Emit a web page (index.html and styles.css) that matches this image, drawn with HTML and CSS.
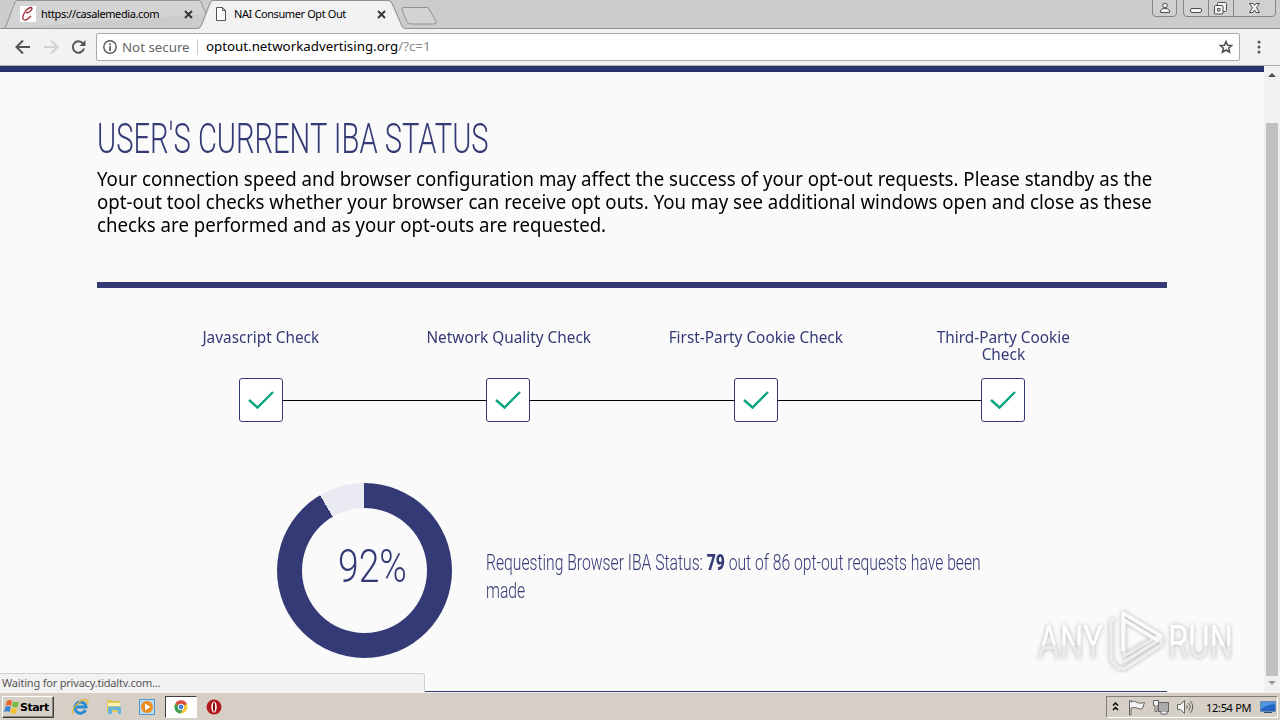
FILE: index.html
```html
<!DOCTYPE html>
<html lang="en">
<head>
  <meta charset="UTF-8">
  <meta name="viewport" content="width=device-width, initial-scale=1.0">
  <title>NAI Consumer Opt Out</title>
  <link rel="stylesheet" href="styles.css">
</head>
<body>
  <div class="tab-strip">
    <svg class="tab-shapes" width="1280" height="29" viewBox="0 0 1280 29">
      <path d="M0 28.5H5L15 2Q16 .5 18 .5H198Q200 .5 201 2L206 14" fill="#d3d3d3" stroke="#929292"/>
      <path d="M404 7.500H428L436 21Q437 24 434 24H411Q408 24 407 22L402 10Q401 8 404 7.500Z" fill="#d3d3d3" stroke="#929292"/>
      <path d="M199 29L202 26L211 3Q212 1 214 1H388Q390 1 391 3L401 26L404 29Z" fill="#f2f2f2"/>
      <path d="M0 28.500H197Q200 28 201 26L210 3Q211 .5 213 .5H388Q391 .5 392 3L402 26Q403 28.500 406 28.500H1280" fill="none" stroke="#929292"/>
    </svg>
    <div class="tab">
      <svg class="favicon" width="16" height="16" viewBox="0 0 16 16">
        <path d="M0 0h16v16H0z" fill="#fff"/>
        <path d="M6 7C10 7 14 2 11 1.500C7 1.500 2 9 3 13C5 16 9 12 11 10" fill="none" stroke="#a32835" stroke-width="1.300"/>
      </svg>
      <span class="tab-title">https://casalemedia.com</span>
      <svg class="tab-close" width="9" height="9" viewBox="0 0 9 9"><path d="M1 1l7 7M8 1L1 8"/></svg>
    </div>
    <div class="tab">
      <svg class="favicon" width="16" height="16" viewBox="0 0 16 16">
        <path d="M3.500 1.500h6l3 3v10h-9zM9.500 1.500v3h3" fill="#fff" stroke="#555"/>
      </svg>
      <span class="tab-title">NAI Consumer Opt Out</span>
      <svg class="tab-close" width="9" height="9" viewBox="0 0 9 9"><path d="M1 1l7 7M8 1L1 8"/></svg>
    </div>
    <svg class="window-buttons" width="128" height="18" viewBox="0 0 128 18">
      <g fill="#d0d0d0" stroke="#858585">
        <path d="M.5 0V13Q.5 16.500 4 16.500H21Q24.500 16.500 24.500 13V0"/>
        <path d="M31.500 0V13Q31.500 16.500 35 16.500H120Q123.500 16.500 123.500 13V0M56.500 0V16M81.500 0V16"/>
      </g>
      <g fill="#f5f5f5" stroke="#4c4c4c">
        <circle cx="13" cy="5.500" r="2.300"/>
        <path d="M8.500 12.500V11Q9 9 11.500 8.500H14.500Q17 9 17.500 11V12.500Z"/>
        <rect x="38.500" y="8.500" width="11" height="4" rx="1.500"/>
        <rect x="65.500" y="2.500" width="9" height="9" rx="1"/>
        <rect x="62.500" y="5.500" width="8.500" height="8.500" rx="1"/>
        <path d="M65.500 8.500h2.500v2.500h-2.500z"/>
        <path d="M97.500 3.500H101L102.500 5.500L104 3.500H107.500L104.500 7.800L107.500 12.500H104L102.500 10L101 12.500H97.500L100.500 7.800Z"/>
      </g>
    </svg>
  </div>

  <div class="toolbar">
    <svg class="nav-icons" width="84" height="26" viewBox="0 0 84 26" fill="none" stroke-width="2">
      <path d="M29 13H16M22 6.500L15.500 13L22 19.500" stroke="#555"/>
      <path d="M43 13H56M50 6.500L56.500 13L50 19.500" stroke="#d2d2d2"/>
      <path d="M82 9.500A5.700 5.700 0 1 0 83 14.500" stroke="#555"/>
      <path d="M84.500 6V12H78.500Z" fill="#555"/>
    </svg>
    <div class="address-bar">
      <svg class="info-icon" width="14" height="14" viewBox="0 0 14 14">
        <circle cx="7" cy="7" r="6.200" fill="none" stroke="#555" stroke-width="1.400"/>
        <path d="M6.200 3.200h1.700v1.700H6.200zM6.200 6h1.700v5H6.200z" fill="#555"/>
      </svg>
      <span class="security">Not secure</span>
      <span class="url">optout.networkadvertising.org<span class="url-path">/?c=1</span></span>
      <svg class="star" width="14" height="14" viewBox="0 0 14 14">
        <path d="M7 1.500L8.600 5.200L12.700 5.500L9.600 8.200L10.600 12.200L7 10L3.400 12.200L4.400 8.200L1.300 5.500L5.400 5.200Z" fill="none" stroke="#4d4d4d" stroke-width="1.500"/>
      </svg>
    </div>
    <svg class="menu-dots" width="4" height="14" viewBox="0 0 4 14" fill="#555">
      <circle cx="2" cy="2" r="1.500"/><circle cx="2" cy="7" r="1.500"/><circle cx="2" cy="12" r="1.500"/>
    </svg>
  </div>

  <div class="viewport">
    <div class="page">
      <h1><span class="narrow">USER'S CURRENT IBA STATUS</span></h1>
      <p class="intro">
        <span class="line">Your connection speed and browser configuration may affect the success of your opt-out requests. Please standby as the</span>
        <span class="line">opt-out tool checks whether your browser can receive opt outs. You may see additional windows open and close as these</span>
        <span class="line">checks are performed and as your opt-outs are requested.</span>
      </p>

      <div class="checks">
        <div class="check">
          <div class="check-label">Javascript Check</div>
          <div class="check-box"><svg width="28" height="22" viewBox="0 0 28 22"><path d="M2 11L10.500 18.500L26 3"/></svg></div>
        </div>
        <div class="check">
          <div class="check-label">Network Quality Check</div>
          <div class="check-box"><svg width="28" height="22" viewBox="0 0 28 22"><path d="M2 11L10.500 18.500L26 3"/></svg></div>
        </div>
        <div class="check">
          <div class="check-label">First-Party Cookie Check</div>
          <div class="check-box"><svg width="28" height="22" viewBox="0 0 28 22"><path d="M2 11L10.500 18.500L26 3"/></svg></div>
        </div>
        <div class="check">
          <div class="check-label">Third-Party Cookie<br>Check</div>
          <div class="check-box"><svg width="28" height="22" viewBox="0 0 28 22"><path d="M2 11L10.500 18.500L26 3"/></svg></div>
        </div>
      </div>

      <div class="progress">
        <div class="donut"><div class="donut-hole"><span class="narrow">92%</span></div></div>
        <div class="progress-text"><span class="narrow">Requesting Browser IBA Status: <b>79</b> out of 86 opt-out requests have been<br>made</span></div>
      </div>
    </div>

    <div class="scrollbar">
      <svg width="8" height="4" viewBox="0 0 8 4"><path d="M0 4L4 0L8 4Z" fill="#4d4d4d"/></svg>
      <div class="thumb"></div>
      <svg width="8" height="4" viewBox="0 0 8 4"><path d="M0 0L4 4L8 0Z" fill="#999"/></svg>
    </div>

    <div class="status-bubble">Waiting for privacy.tidaltv.com...</div>

    <svg class="watermark" width="210" height="76" viewBox="0 0 210 76">
      <defs>
        <linearGradient id="fade" x1="0" y1="0" x2="0" y2="1">
          <stop offset=".55" stop-color="#fff"/><stop offset=".55" stop-color="#ebebeb"/>
        </linearGradient>
      </defs>
      <g class="watermark-text" fill="url(#fade)">
        <text x="8" y="55" textLength="65" lengthAdjust="spacingAndGlyphs">ANY</text>
        <text x="138" y="55" textLength="65" lengthAdjust="spacingAndGlyphs">RUN</text>
      </g>
      <g class="watermark-logo">
        <path d="M94 17V53L128 33" stroke="#e9e9e9"/>
        <path d="M85 16L81 18V57L88 65L94 66L131 42L132 35L94 59" stroke="#ededed"/>
        <path d="M93 48V10L131 33L127 37L94 17" stroke="#fbfbfb"/>
      </g>
    </svg>
  </div>

  <div class="taskbar">
    <div class="start">
      <svg width="16" height="16" viewBox="0 0 16 16">
        <path d="M3 2Q6 0 8 2L7 7Q4 5 1.500 7Z" fill="#e9642b"/>
        <path d="M9 2.500Q12 4 15 2.500L13.500 8Q11 9 8 7.500Z" fill="#78b942"/>
        <path d="M1.300 8Q4 6 6.700 8L5.500 13Q3 11.500 0 13Z" fill="#3a83cf"/>
        <path d="M7.700 8.500Q10 10 13.200 9L12 14Q9 15.500 6.300 13.500Z" fill="#f4c12e"/>
      </svg>
      <span>Start</span>
    </div>
    <div class="launcher">
      <svg width="18" height="18" viewBox="0 0 18 18">
        <path d="M14.500 12A5.600 5.600 0 1 1 15 9H5" fill="none" stroke="#278bd3" stroke-width="3"/>
        <path d="M2 16C-1 13 9 0 16 2Q18 3 16 6" fill="none" stroke="#e5b637" stroke-width="1.300"/>
      </svg>
    </div>
    <div class="launcher">
      <svg width="18" height="18" viewBox="0 0 18 18">
        <path d="M2 2h5l1 1h7v11H2z" fill="#e6c65c"/>
        <path d="M3 5h12v3H3z" fill="#fff3b4"/>
        <path d="M3 16V10Q3 8.500 5 8.500H14Q16 8.500 16 10V16H13V12H7V16Z" fill="#69b5dd"/>
      </svg>
    </div>
    <div class="launcher">
      <svg width="18" height="18" viewBox="0 0 18 18">
        <rect x="1.500" y="1.500" width="15" height="15" fill="#b9dcf3" stroke="#5796c9"/>
        <circle cx="9" cy="9" r="6" fill="#f08a1d"/>
        <path d="M7 5.500L12.500 9L7 12.500Z" fill="#fff"/>
      </svg>
    </div>
    <div class="launcher launcher-open">
      <svg width="14" height="14" viewBox="0 0 14 14">
        <circle cx="7" cy="7" r="6.500" fill="#f4c936"/>
        <path d="M7 7L1.200 4A6.500 6.500 0 0 1 12.900 4Z" fill="#dc4b3e"/>
        <path d="M7 7L1.200 4A6.500 6.500 0 0 0 6.500 13.500L9.500 8.500Z" fill="#3ea055"/>
        <circle cx="7" cy="7" r="3.200" fill="#fff"/><circle cx="7" cy="7" r="2.400" fill="#4b82d7"/>
      </svg>
    </div>
    <div class="launcher">
      <svg width="16" height="16" viewBox="0 0 16 16">
        <circle cx="8" cy="8" r="7.500" fill="#b51720"/>
        <ellipse cx="8" cy="8" rx="2.700" ry="5.500" fill="#fff"/><ellipse cx="8" cy="8" rx="1.100" ry="4.700" fill="#7c0c12"/>
      </svg>
    </div>
    <div class="tray">
      <svg width="92" height="20" viewBox="0 0 92 20">
        <path d="M6 8.500L8.500 6L11 8.500M6 13L8.500 10.500L11 13" fill="none" stroke="#000" stroke-width="1.500"/>
        <g fill="#f5f5f5" stroke="#646464">
          <path d="M22.500 18V3.500H24V5Q28 3 30 5.500Q33 7 37.500 5.500L35.500 11.500Q33 13 30 11Q28 10 24 11V18Z"/>
          <path d="M51.500 5.500H61.500V14.500H51.500Z" fill="#aaa"/>
          <path d="M54 14.500V17H60V14.500M46.500 3.500H51.500V8.500H50V14.500H48V8.500H46.500Z"/>
          <path d="M70.500 7.500H73.500L77.500 3.500V16.500L73.500 12.500H70.500Z"/>
          <path d="M79.500 8Q81 10 79.500 12M81.500 6Q85 10 81.500 14M83.500 4Q88 10 83.500 16" fill="none"/>
        </g>
      </svg>
      <span class="clock">12:54 PM</span>
      <svg width="16" height="14" viewBox="0 0 16 14">
        <path d="M.5 1.500H15.500V11.500H.5Z" fill="#2467c3" stroke="#6c8aae"/>
        <path d="M1 2H15V4Q8 4 1 9Z" fill="#4f94e2"/><path d="M4 12.500H12" stroke="#344d70"/>
      </svg>
    </div>
  </div>
</body>
</html>
```

FILE: styles.css
```css
:root {
  --navy: #343a75;
  --chrome: #f2f2f2;
  --strip: #cccccc;
  --taskbar: #d5cfc6;
}

* {
  box-sizing: border-box;
  margin: 0;
  padding: 0;
}

body {
  width: 1280px;
  height: 720px;
  display: flex;
  flex-direction: column;
  overflow: hidden;
  font-family: "Noto Sans", sans-serif;
  background: #fafafa;
}

svg {
  display: block;
  flex: none;
}

/* Browser tabs */
.tab-strip {
  position: relative;
  height: 29px;
  display: flex;
  background: var(--strip);
}

.tab-shapes {
  position: absolute;
  top: 0;
  left: 0;
}

.tab {
  position: relative;
  width: 193px;
  height: 28px;
  padding-left: 20px;
  display: flex;
  align-items: center;
}

.tab-title {
  width: 143px;
  margin-left: 5px;
  padding-bottom: 2px;
  font-size: 11px;
  letter-spacing: -.4px;
  white-space: nowrap;
}

.tab-close {
  margin-left: 1px;
  fill: none;
  stroke: #333;
  stroke-width: 1.8;
}

.window-buttons {
  position: relative;
  margin-left: auto;
}

/* Toolbar */
.toolbar {
  height: 37px;
  display: flex;
  align-items: center;
  background: var(--chrome);
  border-bottom: 1px solid #adadad;
}

.nav-icons {
  width: 86px;
  overflow: visible;
}

.address-bar {
  width: 1144px;
  height: 28px;
  margin-left: 10px;
  padding: 0 6px;
  display: flex;
  align-items: center;
  background: #fff;
  border: 1px solid #aaa;
  border-radius: 2px;
  font-size: 13.3px;
}

.security {
  width: 76px;
  margin-left: 5px;
  color: #666;
  border-right: 1px solid #ccc;
  line-height: 16px;
  white-space: nowrap;
}

.url {
  margin-left: 8px;
  padding-bottom: 2px;
  white-space: nowrap;
}

.url-path {
  color: #888;
}

.star {
  margin-left: auto;
}

.menu-dots {
  margin-left: 17px;
}

/* Page */
.viewport {
  position: relative;
  height: 626px;
  display: flex;
  background: #fafafa;
}

.page {
  width: 1264px;
  height: 626px;
  padding: 42px 97px 0;
  border-top: 6px solid #273469;
  color: var(--navy);
}

/* Condensed headline type */
.narrow {
  display: inline-block;
  transform-origin: 0 50%;
  white-space: nowrap;
}

h1 {
  height: 50px;
  font: 300 42px/50px Roboto, sans-serif;
}

h1 .narrow {
  transform: scaleX(.694);
}

.intro {
  height: 124px;
  padding-top: 3px;
  border-bottom: 6px solid var(--navy);
  font-size: 20px;
  line-height: 23px;
  color: #000;
}

.line {
  display: block;
  transform: scaleX(.9315);
  transform-origin: 0 50%;
  white-space: nowrap;
}

.checks {
  position: relative;
  width: 990px;
  margin: 41px 0 0 40px;
  display: grid;
  grid-template-columns: repeat(4, 247.5px);
}

.checks::before {
  content: "";
  position: absolute;
  left: 124px;
  right: 124px;
  top: 71px;
  border-top: 1px solid #000;
}

.check {
  display: flex;
  flex-direction: column;
  align-items: center;
}

.check-label {
  height: 49px;
  font-size: 16px;
  line-height: 17px;
  text-align: center;
  transform: scaleX(.96);
  white-space: nowrap;
}

.check-box {
  position: relative;
  width: 44px;
  height: 44px;
  display: flex;
  align-items: center;
  justify-content: center;
  background: #fff;
  border: 1px solid var(--navy);
  border-radius: 3px;
}

.check-box path {
  fill: none;
  stroke: #0ca57f;
  stroke-width: 2.4;
}

.progress {
  height: 209px;
  margin-top: 61px;
  padding-left: 180px;
  display: flex;
  border-bottom: 1px solid var(--navy);
}

.donut {
  flex: none;
  width: 175px;
  height: 175px;
  padding: 25px;
  border-radius: 50%;
  background: conic-gradient(var(--navy) 0 91.5%, #e9eaf2 91.5%);
}

.donut-hole {
  height: 125px;
  padding: 31px 0 0 36px;
  border-radius: 50%;
  background: #fafafa;
  font: 300 46px/54px Roboto, sans-serif;
}

.donut-hole .narrow {
  transform: scaleX(.81);
}

.progress-text {
  padding: 66px 0 0 34px;
  font: 300 22px/28px Roboto, sans-serif;
}

.progress-text .narrow {
  transform: scaleX(.713);
}

.progress-text b {
  font-weight: 900;
}

.scrollbar {
  width: 16px;
  padding: 7px 0;
  display: flex;
  flex-direction: column;
  align-items: center;
  background: #f1f1f1;
}

.thumb {
  width: 12px;
  height: 553px;
  margin: 46px 0 5px;
  background: #c1c1c1;
}

.status-bubble {
  position: absolute;
  left: 0;
  bottom: 0;
  width: 425px;
  height: 19px;
  padding-left: 2px;
  background: var(--chrome);
  border: 1px solid #d0d0d0;
  border-width: 1px 1px 0 0;
  border-radius: 0 3px 0 0;
  font-size: 11px;
  line-height: 18px;
  letter-spacing: -.2px;
  color: #555;
}

.watermark {
  position: absolute;
  left: 1030px;
  top: 537px;
  filter: drop-shadow(0 0 2px rgba(0, 0, 0, .28));
}

.watermark-text {
  font: 46px Roboto, sans-serif;
}

.watermark-logo {
  fill: none;
  stroke-width: 3.5;
  stroke-linejoin: round;
}

/* Taskbar */
.taskbar {
  height: 28px;
  padding: 3px 2px 0;
  display: flex;
  background: var(--taskbar);
  border-top: 1px solid #f3f0eb;
}

.start {
  width: 52px;
  height: 22px;
  margin-right: 10px;
  padding-left: 1px;
  display: flex;
  align-items: center;
  border: 1px solid;
  border-color: #fff #404040 #404040 #fff;
  box-shadow: inset -1px -1px #85817b;
  font: bold 11px "DejaVu Sans", sans-serif;
  letter-spacing: -.5px;
}

.launcher {
  width: 32px;
  height: 22px;
  margin-right: 1.6px;
  display: flex;
  align-items: center;
  justify-content: center;
}

.launcher-open {
  background: #fff;
  border: 1px solid;
  border-color: #404040 #fff #fff #404040;
}

.tray {
  width: 172px;
  height: 22px;
  margin-left: auto;
  display: flex;
  align-items: center;
  border: 1px solid;
  border-color: #817d76 #fff #fff #817d76;
}

.clock {
  width: 54px;
  margin-left: 7px;
  font-size: 11px;
  letter-spacing: -.3px;
  white-space: nowrap;
}
```
